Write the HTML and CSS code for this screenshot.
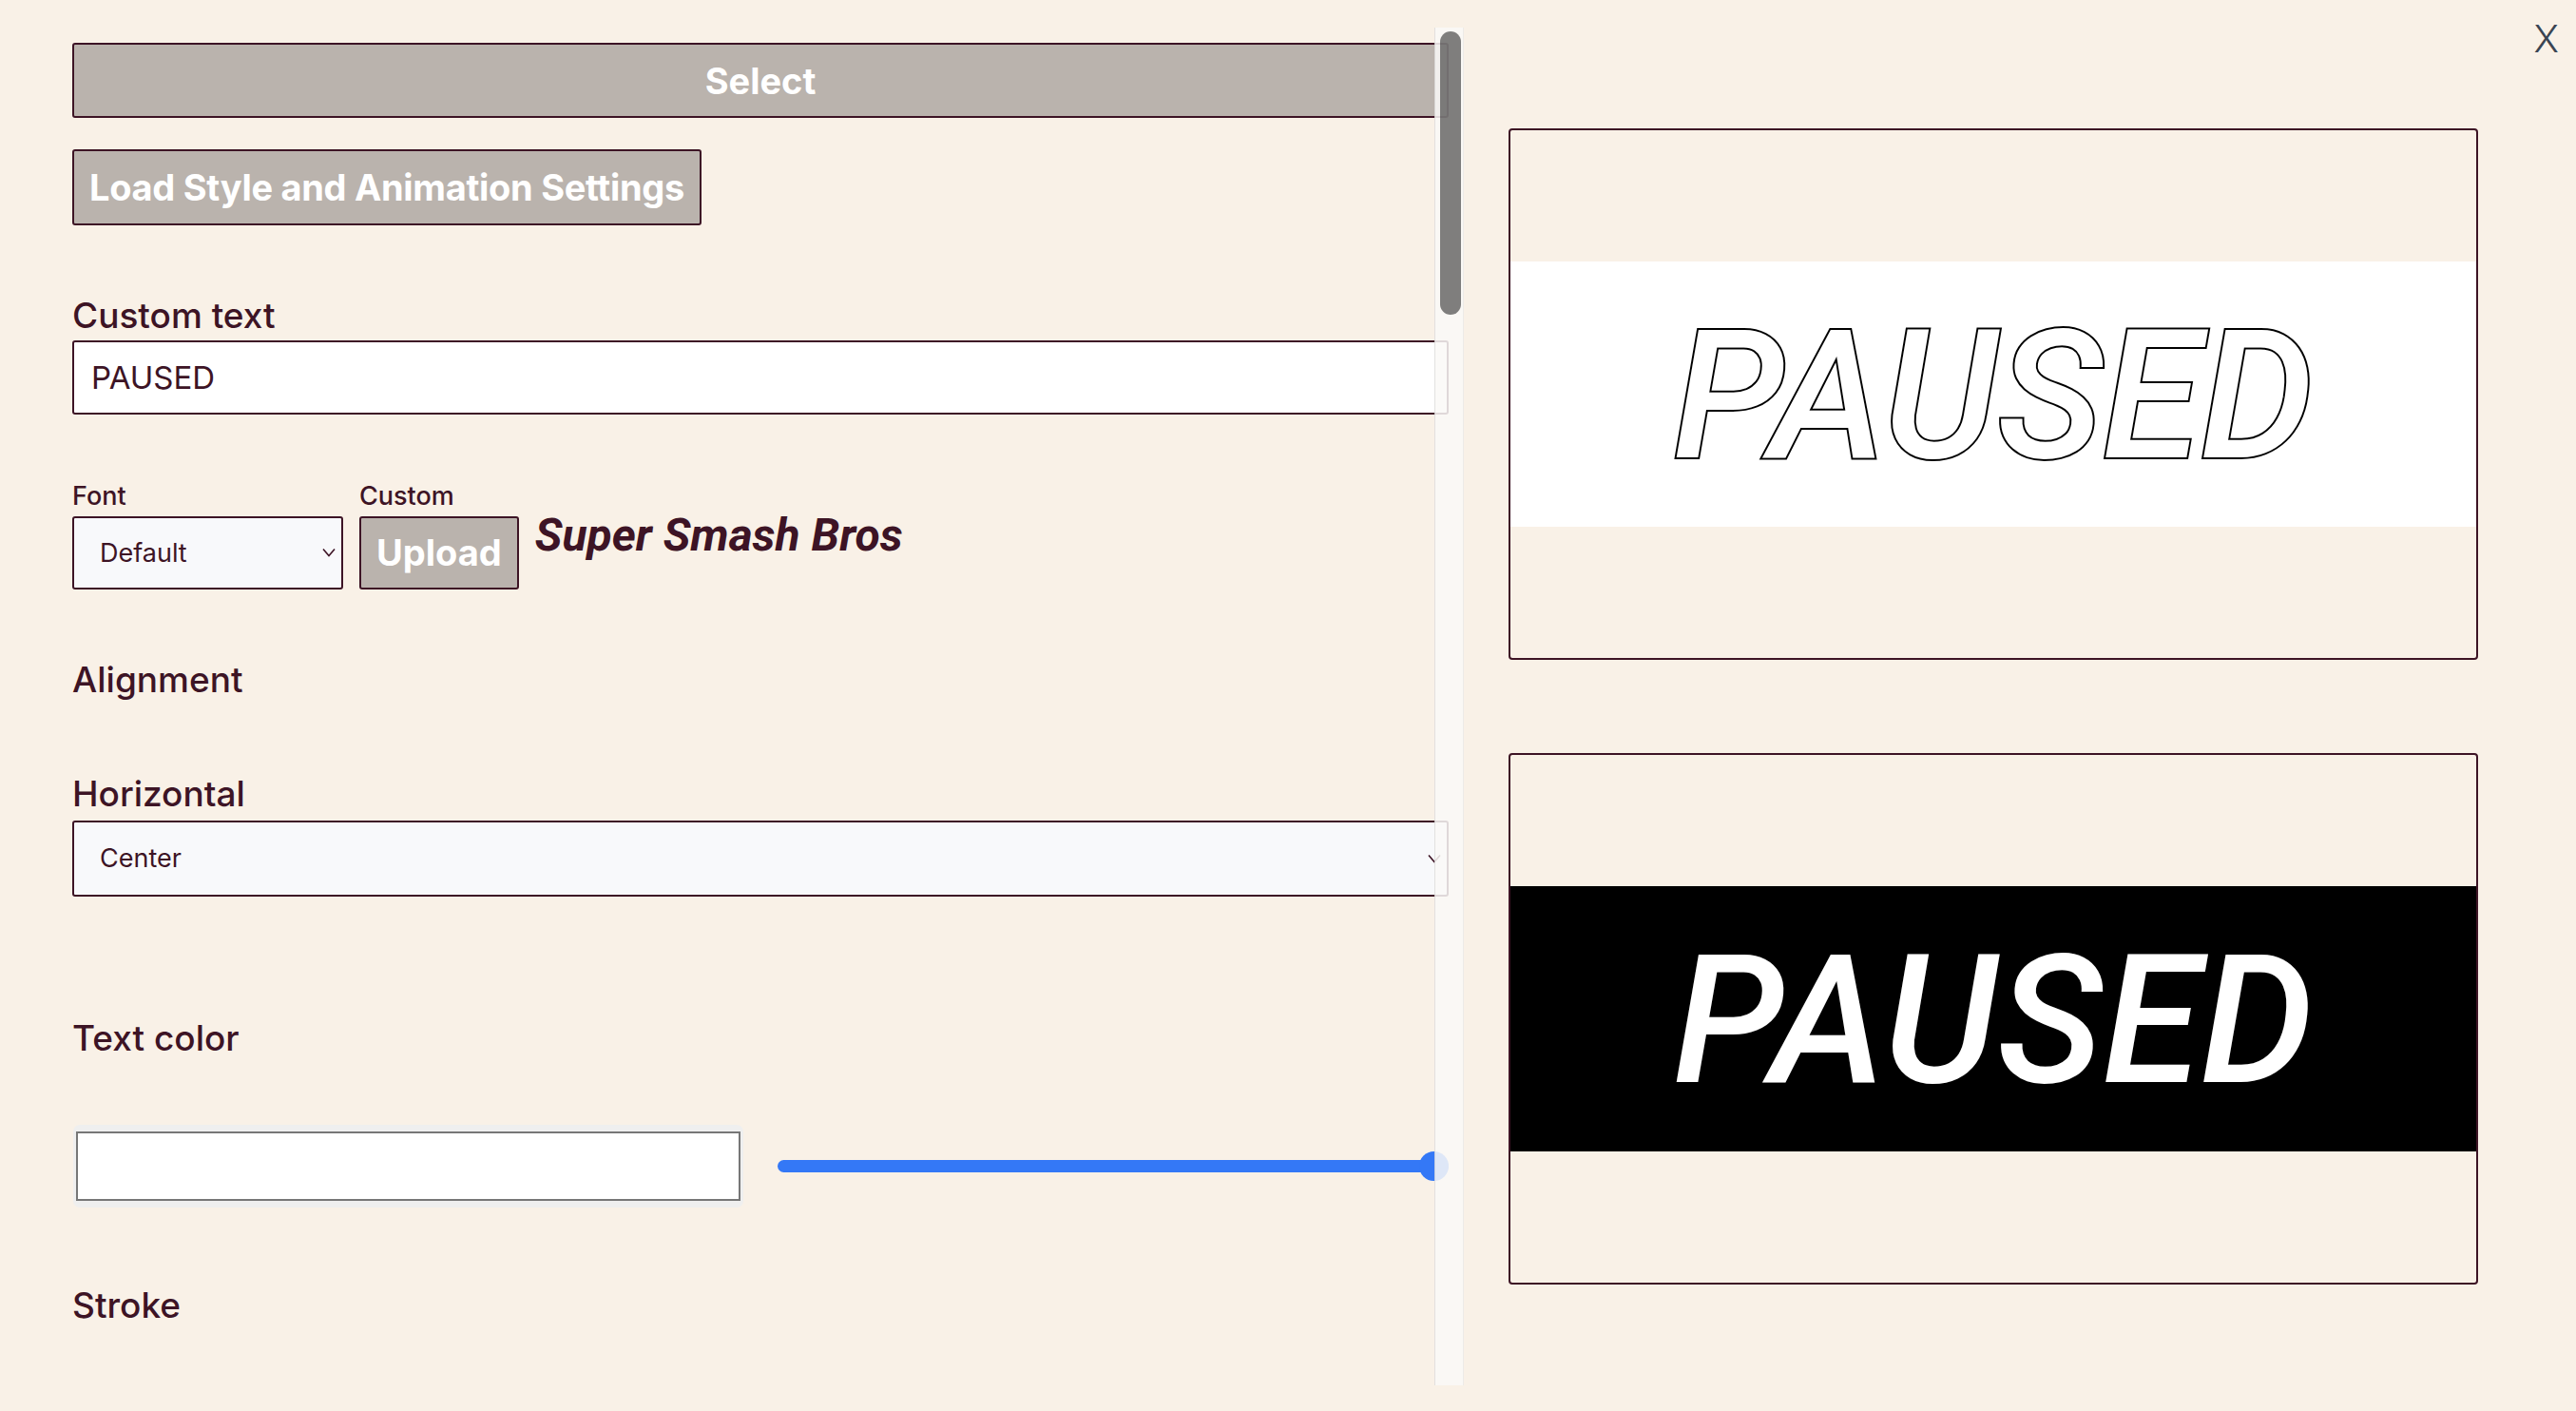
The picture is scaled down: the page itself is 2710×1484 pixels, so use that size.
FILE: index.html
```html
<!DOCTYPE html>
<html lang="en">
<head>
<meta charset="utf-8">
<title>Pause Screen Settings</title>
<link rel="stylesheet" href="styles.css">
</head>
<body>
<div class="app">
  <div class="panel">
    <div class="panel-content">
      <button class="btn btn-block">Select</button>
      <button class="btn btn-load">Load Style and Animation Settings</button>

      <label class="label label-custom" for="custom-text">Custom text</label>
      <input id="custom-text" class="text-input" type="text" value="PAUSED">

      <div class="font-row">
        <div class="field">
          <label class="label-sm" for="font-select">Font</label>
          <div class="select-wrap select-small">
            <select id="font-select" class="select"><option>Default</option></select>
            <svg class="chevron" viewBox="0 0 14 10" width="14" height="10"><path d="M1 1.5 L7 8.5 L13 1.5" fill="none" stroke="#3d1425" stroke-width="1.6"/></svg>
          </div>
        </div>
        <div class="field">
          <span class="label-sm">Custom</span>
          <button class="btn btn-upload">Upload</button>
        </div>
        <div class="font-sample">Super Smash Bros</div>
      </div>

      <h3 class="label label-section">Alignment</h3>

      <label class="label label-horizontal" for="h-align">Horizontal</label>
      <div class="select-wrap select-wide">
        <select id="h-align" class="select select-full"><option>Center</option></select>
        <svg class="chevron" viewBox="0 0 14 10" width="14" height="10"><path d="M1 1.5 L7 8.5 L13 1.5" fill="none" stroke="#3d1425" stroke-width="1.6"/></svg>
      </div>

      <label class="label label-color">Text color</label>
      <div class="color-row">
        <input class="color-input" type="color" value="#ffffff">
        <input class="range" type="range" min="0" max="100" value="100">
      </div>

      <label class="label label-stroke">Stroke</label>
    </div>
    <div class="scrollbar"><div class="thumb"></div></div>
  </div>

  <div class="right">
    <div class="previews">
      <div class="preview">
        <div class="band band-light"><span class="paused paused-outline">PAUSED</span></div>
      </div>
      <div class="preview">
        <div class="band band-dark"><span class="paused">PAUSED</span></div>
      </div>
    </div>
    <button class="close">X</button>
  </div>
</div>
</body>
</html>
```

FILE: styles.css
```css
* { box-sizing: border-box; }

html, body {
  margin: 0;
  padding: 0;
  background: #f9f1e7;
}

body {
  font-family: Inter, "Noto Sans", sans-serif;
  color: #3d1425;
  width: 2710px;
  height: 1484px;
  overflow: hidden;
}

.app {
  display: flex;
  height: 1484px;
}

/* ---------- left settings panel ---------- */
.panel {
  position: relative;
  width: 1496px;
  height: 1428px;
  margin: 29px 0 0 44px;
  overflow: hidden;
  flex: none;
}

.panel-content {
  padding: 16px 16px 0 32px;
}

.btn {
  display: block;
  font-family: Inter, sans-serif;
  font-weight: 700;
  font-size: 38px;
  color: #ffffff;
  background: #bab3ad;
  border: 2px solid #3d1425;
  border-radius: 3px;
  line-height: 1;
  padding: 0;
}

.btn-block {
  width: 100%;
  height: 79px;
  text-align: center;
}

.btn-load {
  margin-top: 33px;
  height: 80px;
  padding: 0 16px;
  font-size: 38px;
  letter-spacing: -0.3px;
}

.label {
  display: block;
  font-size: 37px;
  font-weight: 500;
  line-height: 1.2;
  margin: 0;
}

.label-custom { margin-top: 73px; }

.text-input {
  display: block;
  width: 100%;
  height: 78px;
  margin-top: 4px;
  border: 2px solid #3d1425;
  border-radius: 3px;
  background: #ffffff;
  font-family: Inter, sans-serif;
  font-size: 33px;
  color: #3d1425;
  padding: 0 18px;
  outline: none;
}

.font-row {
  display: flex;
  align-items: center;
  gap: 17px;
  margin-top: 70px;
}

.field {
  display: flex;
  flex-direction: column;
  gap: 4px;
}

.label-sm {
  display: block;
  font-size: 27px;
  font-weight: 500;
  line-height: 1.2;
}

.select-wrap {
  position: relative;
}

.select {
  display: block;
  -webkit-appearance: none;
  appearance: none;
  font-family: Inter, sans-serif;
  font-size: 27px;
  color: #3d1425;
  background: #f8f9fb;
  border: 2px solid #3d1425;
  border-radius: 3px;
  padding: 0 40px 0 27px;
  outline: none;
}

.select-small .select {
  width: 285px;
  height: 77px;
}

.select-full {
  width: 100%;
  height: 80px;
}

.chevron {
  position: absolute;
  right: 8px;
  top: 50%;
  margin-top: -5px;
  pointer-events: none;
}

.btn-upload {
  height: 77px;
  padding: 0 16px;
}

.font-sample {
  font-family: Roboto, sans-serif;
  font-style: italic;
  font-weight: 700;
  font-size: 48px;
  line-height: 1.17;
  margin-left: 0;
}

.label-section { margin-top: 73px; }
.label-horizontal { margin-top: 76px; }

.select-wide { margin-top: 5px; }

.label-color { margin-top: 127px; }

.color-row {
  display: flex;
  align-items: center;
  gap: 36px;
  margin-top: 69px;
}

.color-input {
  -webkit-appearance: none;
  appearance: none;
  width: 705px;
  height: 87px;
  margin: 0 0 0 1px;
  padding: 0;
  border: none;
  border-radius: 7px;
  background: #efefef;
  flex: none;
}

.color-input::-webkit-color-swatch-wrapper {
  padding: 7px 3px;
}

.color-input::-webkit-color-swatch {
  border: 2px solid #777777;
  border-radius: 0;
}

.range {
  -webkit-appearance: none;
  appearance: none;
  flex: 1;
  height: 32px;
  margin: 0;
  background: transparent;
}

.range::-webkit-slider-runnable-track {
  height: 13px;
  background: #3478f6;
  border-radius: 7px;
}

.range::-webkit-slider-thumb {
  -webkit-appearance: none;
  appearance: none;
  width: 31px;
  height: 31px;
  border-radius: 50%;
  background: #3478f6;
  margin-top: -9px;
}

.label-stroke { margin-top: 81px; }

/* overlay scrollbar */
.scrollbar {
  position: absolute;
  top: 0;
  right: 0;
  bottom: 0;
  width: 31px;
  background: rgba(250, 249, 247, 0.86);
  border-left: 1px solid rgba(0, 0, 0, 0.09);
  border-right: 1px solid rgba(0, 0, 0, 0.05);
}

.thumb {
  position: absolute;
  top: 4px;
  left: 5px;
  width: 22px;
  height: 298px;
  border-radius: 11px;
  background: rgba(0, 0, 0, 0.49);
}

/* ---------- right preview area ---------- */
.right {
  flex: 1;
  display: flex;
}

.previews {
  width: 1020px;
  margin: 135px 0 0 47px;
  display: flex;
  flex-direction: column;
  gap: 98px;
  flex: none;
}

.preview {
  height: 559px;
  border: 2px solid #3d1425;
  border-radius: 4px;
  display: flex;
  align-items: center;
}

.band {
  width: 100%;
  height: 279px;
  display: flex;
  align-items: center;
  justify-content: center;
}

.band-light { background: #ffffff; }
.band-dark { background: #000000; }

.paused {
  font-family: Roboto, sans-serif;
  font-style: italic;
  font-weight: 500;
  font-size: 188px;
  line-height: 1;
  color: #ffffff;
  margin-top: 4px;
}

.paused-outline {
  -webkit-text-stroke: 4px #000000;
  paint-order: stroke fill;
}

.close {
  margin: 17px 18px 0 auto;
  align-self: flex-start;
  background: none;
  border: none;
  padding: 0;
  font-family: Inter, sans-serif;
  font-size: 40px;
  font-weight: 300;
  line-height: 1.2;
  color: #3a4452;
}
```
